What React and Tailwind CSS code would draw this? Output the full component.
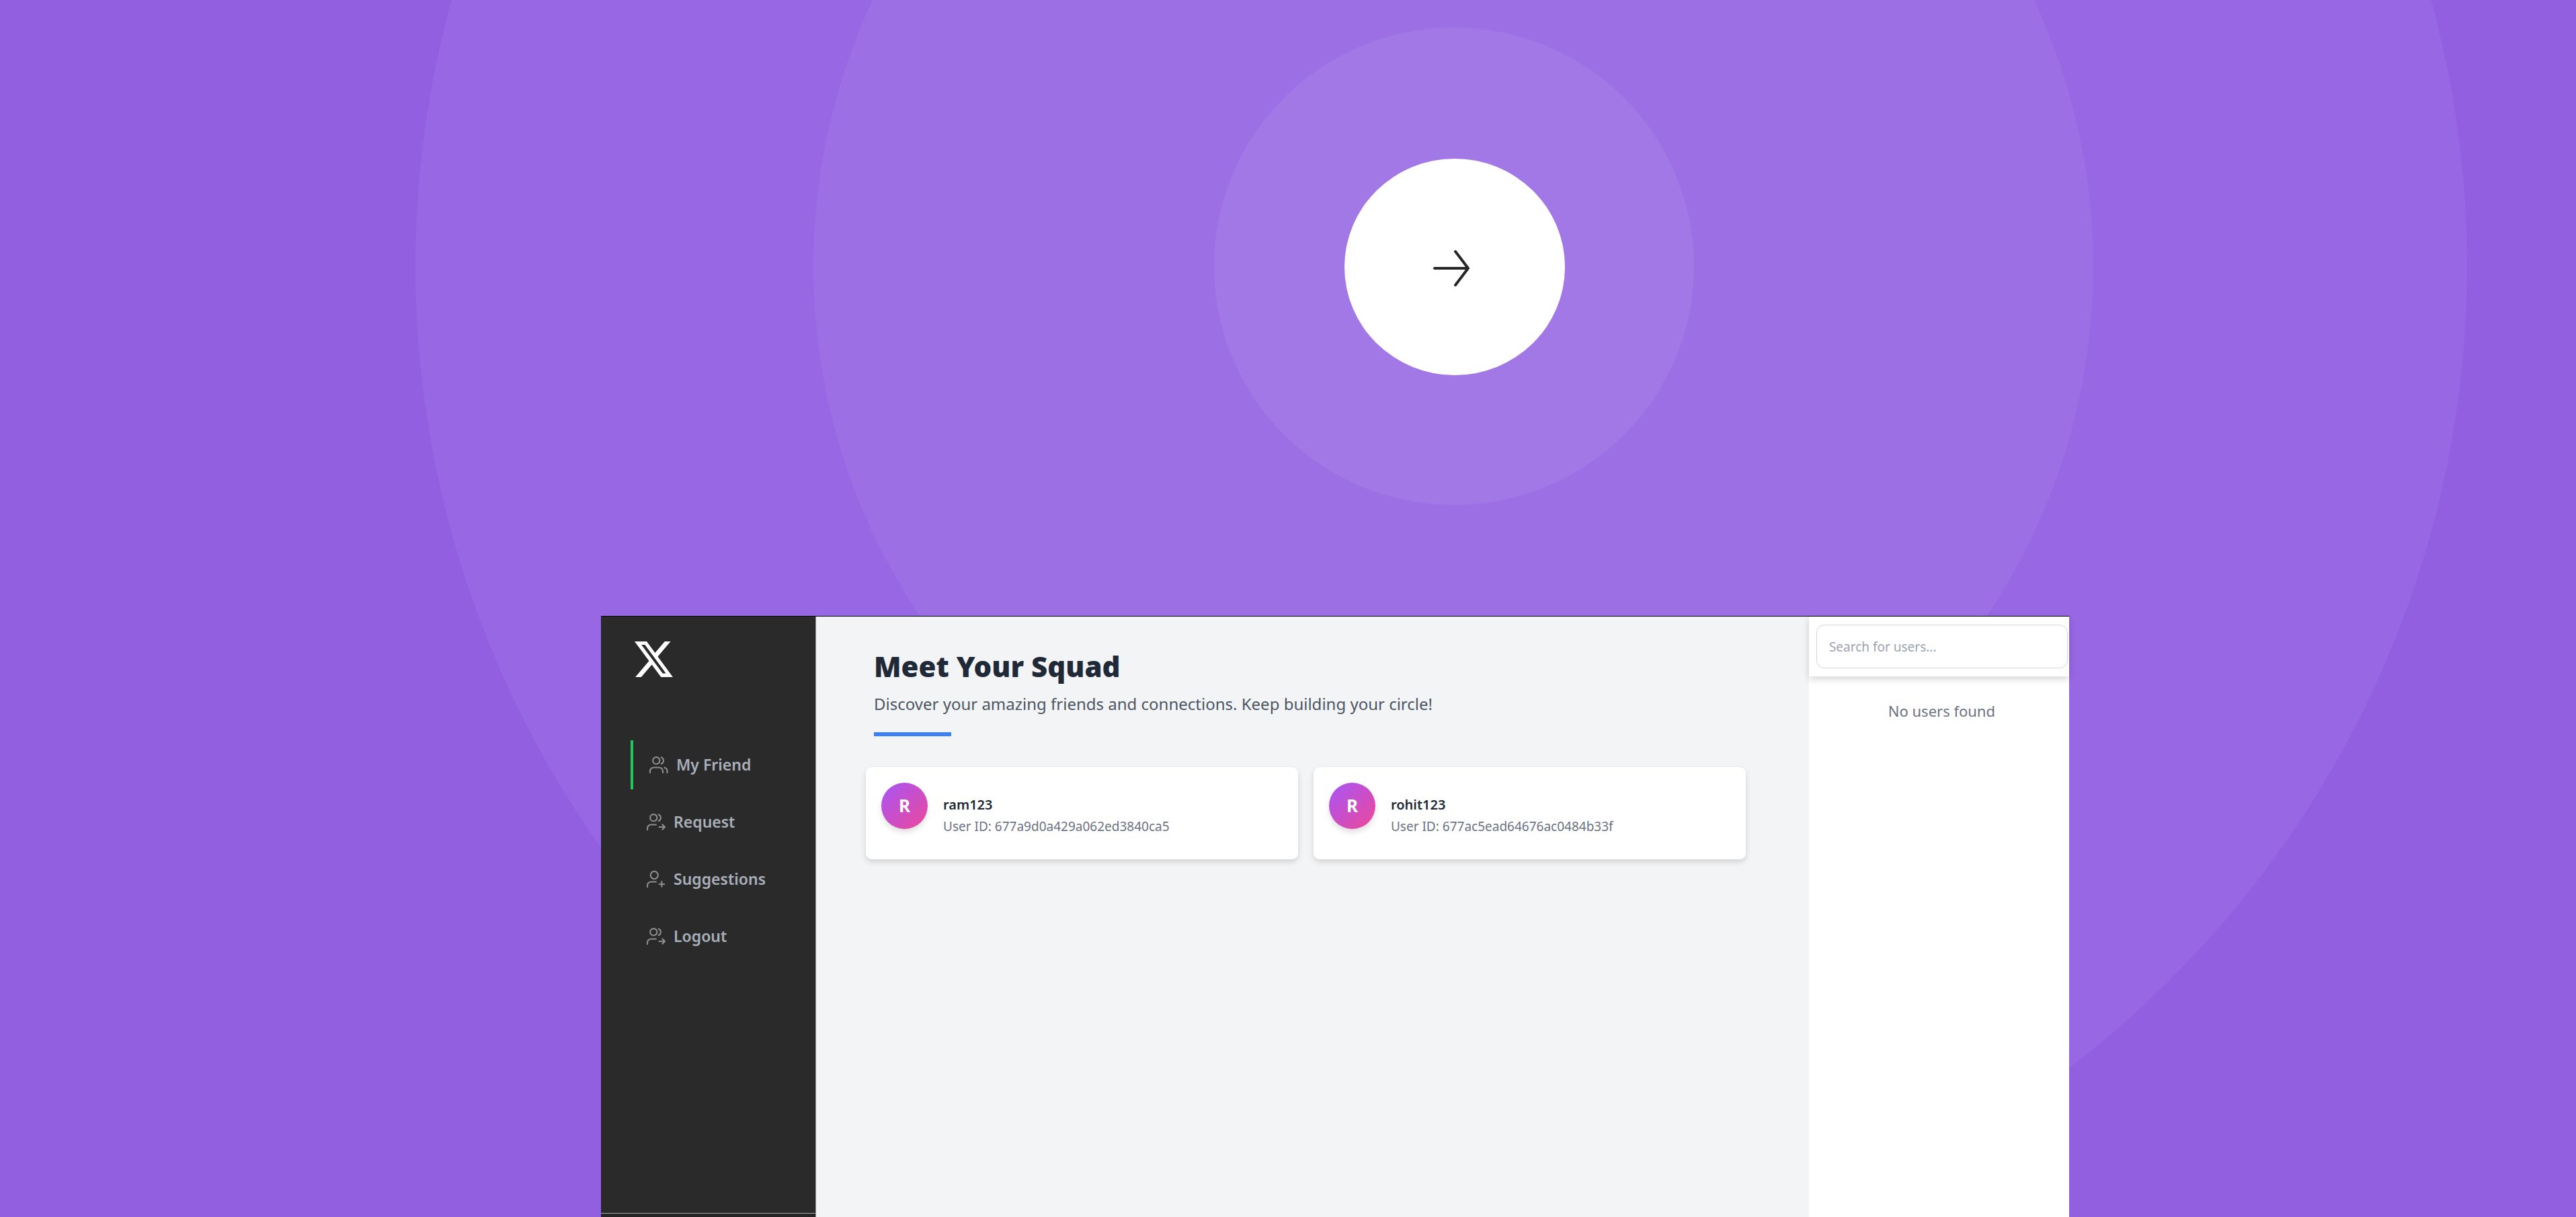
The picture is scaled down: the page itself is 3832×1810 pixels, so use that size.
const navItems = [
  { label: "My Friend", icon: "friends", active: true },
  { label: "Request", icon: "request" },
  { label: "Suggestions", icon: "suggest" },
  { label: "Logout", icon: "request" },
];

const friends = [
  { name: "ram123", id: "677a9d0a429a062ed3840ca5" },
  { name: "rohit123", id: "677ac5ead64676ac0484b33f" },
];

function NavIcon({ kind }) {
  return (
    <svg
      viewBox="0 0 28 25"
      className="h-[25px] w-7 shrink-0 text-[#8e8e8e]"
      fill="none"
      stroke="currentColor"
      strokeWidth="2.1"
      aria-hidden="true"
    >
      {kind === "suggest" ? (
        <circle cx="11.3" cy="6.6" r="5.6" />
      ) : (
        <>
          <circle cx="10.3" cy="6.2" r="5.1" />
          <path d="M16.9 1.3a5 5 0 0 1 0 9.8" />
        </>
      )}
      {kind === "friends" ? (
        <>
          <path d="M1 25v-3a5.5 5.5 0 0 1 5.5-5.5h8A5.5 5.5 0 0 1 20 22v3" />
          <path d="M21.6 16.6a5 5 0 0 1 4.9 5V25" />
        </>
      ) : (
        <path d="M1 25v-3a5.5 5.5 0 0 1 5.5-5.5h8.2" />
      )}
      {kind === "request" && (
        <path d="M17.8 20H27M22.8 15.8L27 20l-4.2 4.2" />
      )}
      {kind === "suggest" && <path d="M17.8 20h9.2M22.4 15.2v9.4" />}
    </svg>
  );
}

function Rings() {
  return (
    <svg
      viewBox="0 0 3832 1810"
      preserveAspectRatio="xMidYMin slice"
      className="absolute inset-0 h-full w-full"
      aria-hidden="true"
    >
      <ellipse cx="2144" cy="396" rx="1526" ry="1508" fill="#9867e3" />
      <ellipse cx="2162" cy="396" rx="952" ry="942" fill="#9d6fe4" />
      <ellipse cx="2163" cy="396" rx="357" ry="355" fill="#a178e5" />
    </svg>
  );
}

function Sidebar() {
  return (
    <aside className="flex w-80 shrink-0 flex-col border-r border-[#8f8f8f] bg-[#2a2a2a]">
      <div className="pt-[37px] pl-[50px]">
        <svg
          viewBox="1.25 2.25 21.6 19.5"
          preserveAspectRatio="none"
          className="h-[53px] w-[57px] text-white"
          fill="currentColor"
          role="img"
          aria-label="X"
        >
          <path d="M18.244 2.25h3.308l-7.227 8.26 8.502 11.24H16.17l-5.214-6.817L4.99 21.75H1.68l7.73-8.835L1.254 2.25H8.08l4.713 6.231zm-1.161 17.52h1.833L7.084 4.126H5.117z" />
        </svg>
      </div>
      <nav className="mt-[94px] ml-11 flex flex-1 flex-col gap-3">
        {navItems.map((item) => (
          <button
            key={item.label}
            type="button"
            className={
              item.active
                ? "flex h-[73px] shrink-0 items-center gap-3 border-l-4 border-[#22c55e] px-6 text-[23px] font-semibold text-[#a9b0ba]"
                : "flex h-[73px] shrink-0 items-center gap-3 px-6 text-[23px] font-semibold text-[#a9b0ba]"
            }
          >
            <NavIcon kind={item.icon} />
            {item.label}
          </button>
        ))}
      </nav>
      <div className="h-[6px] shrink-0 border-t border-[#a3a7ad] bg-[#242424]" />
    </aside>
  );
}

function FriendCard({ name, id }) {
  return (
    <article className="flex min-h-[137px] items-start gap-[23px] rounded-[9px] bg-white p-[23px] shadow-[0_4px_8px_rgba(0,0,0,0.14)]">
      <div className="flex size-[69px] shrink-0 items-center justify-center rounded-full bg-[linear-gradient(to_bottom_right,#a855f7,#ec4899)] text-[26px] font-bold text-white shadow-[0_5px_8px_rgba(0,0,0,0.12)]">
        R
      </div>
      <div className="flex flex-col gap-1 pt-[19px]">
        <h2 className="text-xl/7 font-semibold text-[#1f2937]">{name}</h2>
        <p className="text-[19px]/7 text-[#6b7280]">User ID: {id}</p>
      </div>
    </article>
  );
}

function Squad() {
  return (
    <main className="min-w-0 flex-1 bg-[#f3f4f6] pt-[50px] pr-[94px] pl-[74px]">
      <header className="pl-3">
        <h1 className="text-[42px]/12 font-black text-[#1f2937]">
          Meet Your Squad
        </h1>
        <p className="mt-[14px] text-2xl/9 text-[#4b5563]">
          Discover your amazing friends and connections. Keep building your
          circle!
        </p>
        <div className="mt-6 h-[6px] w-[115px] bg-[#3b82f6]" />
      </header>
      <section className="mt-[46px] grid grid-cols-2 gap-[23px]">
        {friends.map((friend) => (
          <FriendCard key={friend.name} {...friend} />
        ))}
      </section>
    </main>
  );
}

function UserSearch() {
  return (
    <aside className="w-[387px] shrink-0 bg-white">
      <div className="bg-white py-3 pr-[2px] pl-[11px] shadow-[0_4px_10px_rgba(0,0,0,0.16)]">
        <input
          type="search"
          aria-label="Search for users"
          placeholder="Search for users..."
          className="block h-[65px] w-full rounded-xl border border-[#d1d5db] px-[18px] text-[19px] placeholder:text-[#9ca3af]"
        />
      </div>
      <p className="mt-[35px] pl-2 text-center text-[22px]/8 text-[#6b7280]">
        No users found
      </p>
    </aside>
  );
}

export default function App() {
  return (
    <div className="relative flex h-screen flex-col overflow-hidden bg-[#925fe0] font-['Noto_Sans',sans-serif]">
      <Rings />
      <div className="relative shrink-0 pt-[236px] pb-[358px]">
        <button
          type="button"
          aria-label="Next"
          className="ml-[52.19%] flex h-[322px] w-[328px] items-center justify-center rounded-[50%] bg-white"
        >
          <svg
            viewBox="0 0 64 58"
            className="h-[58px] w-16 text-[#262827]"
            fill="none"
            stroke="currentColor"
            strokeWidth="4"
            strokeLinecap="round"
            strokeLinejoin="round"
            aria-hidden="true"
          >
            <path d="M2 31h50M33 6l19 25-19 25" />
          </svg>
        </button>
      </div>
      <div className="relative mr-[19.68%] ml-[23.33%] flex min-h-0 flex-1 border-t border-black">
        <Sidebar />
        <Squad />
        <UserSearch />
      </div>
    </div>
  );
}
